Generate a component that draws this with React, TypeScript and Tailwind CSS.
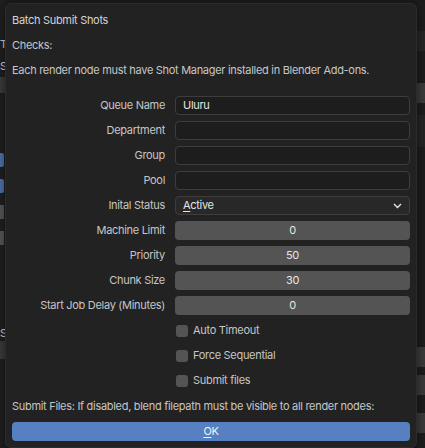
import React from 'react';

const font = { fontFamily: 'Inter, "DejaVu Sans", sans-serif' };

function LabelRow({ label, children }: { label: string; children: React.ReactNode }) {
  return (
    <div className="flex h-[25px] items-center">
      <div className="w-[153px] shrink-0 text-right text-[11px] tracking-[-0.3px] text-[#c6c6c6]">{label}</div>
      <div className="ml-[10px] w-[235px]">{children}</div>
    </div>
  );
}

function TextField({ value }: { value?: string }) {
  return (
    <div className="flex h-[19px] items-center rounded-[4px] border border-[#3d3d3d] bg-[#1d1d1d] px-[7px] text-[11px] tracking-[-0.3px] text-[#e6e6e6]">
      {value}
    </div>
  );
}

function NumberField({ value }: { value: string }) {
  return (
    <div className="flex h-[19px] items-center justify-center rounded-[4px] bg-[#545454] text-[11px] text-[#e6e6e6]">
      {value}
    </div>
  );
}

function Check({ label }: { label: string }) {
  return (
    <div className="flex h-[25px] items-center pl-[164px]">
      <div className="h-[12px] w-[12px] rounded-[3px] bg-[#545454]" />
      <span className="ml-[5px] text-[11px] tracking-[-0.3px] text-[#c6c6c6]">{label}</span>
    </div>
  );
}

export default function App() {
  return (
    <div className="relative h-[448px] w-[425px] overflow-hidden bg-[#1b1b1b]" style={font}>
      {/* blender UI behind the popup */}
      <div className="flex h-full w-full">
        <div className="flex w-[6px] flex-col bg-[#1f1f1f] text-[11px] text-[#cfcfcf]">
          <div className="h-[33px]" />
          <div className="h-[22px] overflow-hidden leading-[22px]">Te</div>
          <div className="h-[22px] overflow-hidden leading-[22px]">St</div>
          <div className="h-[16px] bg-[#3a3a3a]" />
          <div className="h-[30px]" />
          <div className="mt-[30px] h-[14px] w-[4px] rounded-r-[2px] bg-[#4b6fa8]" />
          <div className="mt-[12px] h-[14px] w-[4px] rounded-r-[2px] bg-[#4b6fa8]" />
          <div className="mt-[12px] h-[14px] w-[4px] bg-[#555555]" />
          <div className="mt-[12px] h-[14px] w-[4px] bg-[#555555]" />
          <div className="h-[80px]" />
          <div className="h-[16px] overflow-hidden leading-[16px]">Sl</div>
          <div className="h-[18px] bg-[#3a3a3a]" />
        </div>
        <div className="flex-1" />
        <div className="flex w-[8px] flex-col bg-[#1d1d1d]">
          <div className="mt-[31px] h-[20px] bg-[#262626]" />
          <div className="mt-[32px] h-[20px] bg-[#3a3a3a]" />
          <div className="mt-[12px] h-[32px] bg-[#242424]" />
          <div className="mt-[200px] h-[20px] bg-[#3a3a3a]" />
          <div className="mt-[8px] h-[20px] bg-[#3a3a3a]" />
          <div className="mt-[18px] h-[20px] bg-[#3a3a3a]" />
        </div>
      </div>

      {/* popup */}
      <div className="absolute left-[5px] top-[3px] flex w-[412px] flex-col rounded-[6px] border border-[#2c2c2c] bg-[#232323]/95 px-[6px] pb-[6px] pt-[3px] text-[11px] tracking-[-0.3px] shadow-[0_2px_8px_rgba(0,0,0,0.5)]">
        <div className="flex h-[26px] items-center text-[#d4d4d4]">Batch Submit Shots</div>
        <div className="flex h-[24px] items-center text-[#c6c6c6]">Checks:</div>
        <div className="mb-[10px] flex h-[26px] items-center text-[#c6c6c6]">
          Each render node must have Shot Manager installed in Blender Add-ons.
        </div>

        <LabelRow label="Queue Name"><TextField value="Uluru" /></LabelRow>
        <LabelRow label="Department"><TextField /></LabelRow>
        <LabelRow label="Group"><TextField /></LabelRow>
        <LabelRow label="Pool"><TextField /></LabelRow>
        <LabelRow label="Inital Status">
          <div className="flex h-[19px] items-center justify-between rounded-[4px] border border-[#3d3d3d] bg-[#282828] px-[7px] text-[#e6e6e6]">
            <span><span className="underline underline-offset-2">A</span>ctive</span>
            <svg width="9" height="6" viewBox="0 0 9 6" fill="none" stroke="#e6e6e6" strokeWidth="1.4">
              <path d="M1 1l3.5 3.5L8 1" />
            </svg>
          </div>
        </LabelRow>
        <LabelRow label="Machine Limit"><NumberField value="0" /></LabelRow>
        <LabelRow label="Priority"><NumberField value="50" /></LabelRow>
        <LabelRow label="Chunk Size"><NumberField value="30" /></LabelRow>
        <LabelRow label="Start Job Delay (Minutes)"><NumberField value="0" /></LabelRow>

        <Check label="Auto Timeout" />
        <Check label="Force Sequential" />
        <Check label="Submit files" />

        <div className="flex h-[26px] items-center text-[#c6c6c6]">
          Submit Files: If disabled, blend filepath must be visible to all render nodes:
        </div>
        <div className="mt-[3px] flex h-[19px] items-center justify-center rounded-[4px] bg-[#5680c2] text-[#f2f2f2]">
          <span><span className="underline underline-offset-2">O</span>K</span>
        </div>
      </div>
    </div>
  );
}
